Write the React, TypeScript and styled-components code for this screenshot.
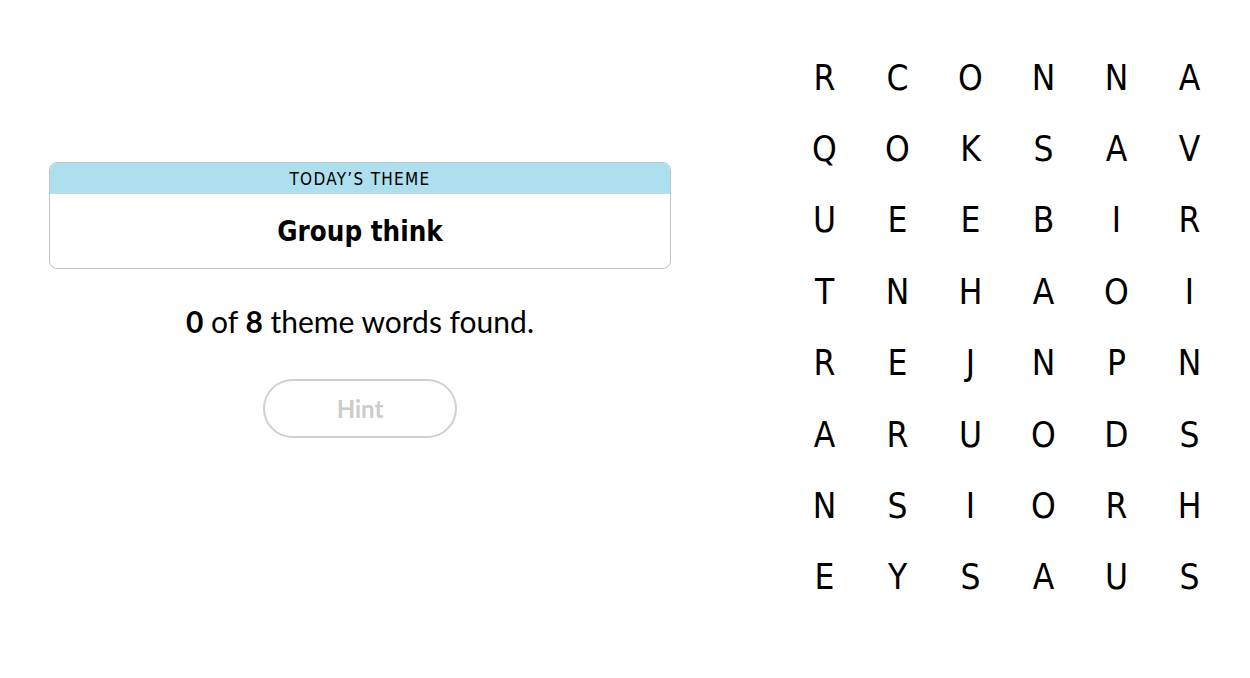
import React from "react";
import styled, { createGlobalStyle } from "styled-components";

const Global = createGlobalStyle`
  html, body { margin: 0; padding: 0; background: #fff; }
  body { font-family: "DejaVu Sans Condensed", "Liberation Sans", sans-serif; color: #000; }
`;

const Page = styled.div`
  display: flex;
  align-items: flex-start;
  width: 1250px;
  height: 678px;
  box-sizing: border-box;
`;

const LeftPanel = styled.section`
  width: 622px;
  margin-left: 49px;
  margin-top: 162px;
  display: flex;
  flex-direction: column;
  align-items: center;
`;

const ThemeCard = styled.div`
  width: 100%;
  border: 1px solid #c4c4c4;
  border-radius: 8px;
  overflow: hidden;
  box-sizing: border-box;
`;

const ThemeHeader = styled.div`
  background: #aedfee;
  height: 31px;
  display: flex;
  align-items: center;
  justify-content: center;
  font-size: 17px;
  letter-spacing: 1.3px;
  text-transform: uppercase;
`;

const ThemeTitle = styled.div`
  height: 74px;
  display: flex;
  align-items: center;
  justify-content: center;
  font-size: 27.5px;
  font-weight: 700;
`;

const Progress = styled.p`
  margin: 34px 0 0;
  font-family: Lato, "Liberation Sans", sans-serif;
  font-size: 30px;
  line-height: 36px;
  b { font-weight: 700; }
`;

const HintButton = styled.button`
  margin-top: 40px;
  width: 194px;
  height: 59px;
  border: 2px solid #d0d0d0;
  border-radius: 30px;
  background: #fff;
  color: #cccccc;
  font-family: Lato, "Liberation Sans", sans-serif;
  font-weight: 700;
  font-size: 24px;
  cursor: default;
`;

const Board = styled.div`
  margin-left: 117px;
  margin-top: 42px;
  display: grid;
  grid-template-columns: repeat(6, 73px);
  grid-auto-rows: 71.4px;
`;

const Cell = styled.div`
  display: flex;
  align-items: center;
  justify-content: center;
  font-size: 35px;
`;

const rows = [
  "RCONNA",
  "QOKSAV",
  "UEEBIR",
  "TNHAOI",
  "REJNPN",
  "ARUODS",
  "NSIORH",
  "EYSAUS",
];

export default function App() {
  return (
    <>
      <Global />
      <Page>
        <LeftPanel>
          <ThemeCard>
            <ThemeHeader>Today’s Theme</ThemeHeader>
            <ThemeTitle>Group think</ThemeTitle>
          </ThemeCard>
          <Progress>
            <b>0</b> of <b>8</b> theme words found.
          </Progress>
          <HintButton>Hint</HintButton>
        </LeftPanel>
        <Board>
          {rows.map((r, i) =>
            r.split("").map((c, j) => <Cell key={`${i}-${j}`}>{c}</Cell>)
          )}
        </Board>
      </Page>
    </>
  );
}
